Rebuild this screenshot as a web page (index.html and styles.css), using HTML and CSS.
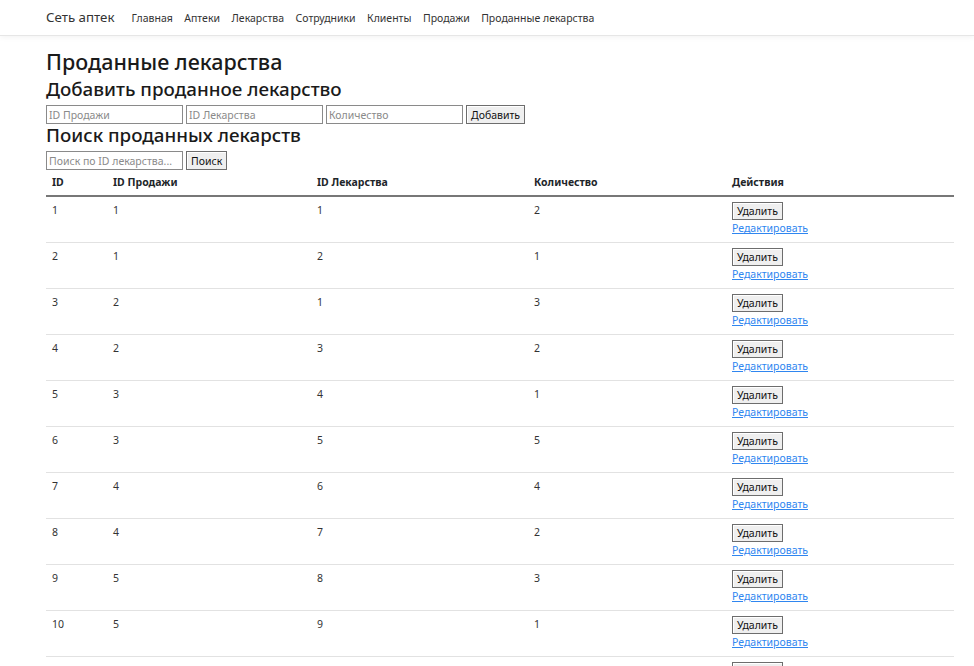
FILE: index.html
```html
<!DOCTYPE html>
<html lang="ru">
<head>
<meta charset="utf-8">
<title>Проданные лекарства</title>
<link rel="stylesheet" href="styles.css">
</head>
<body>
<nav class="navbar">
  <a class="brand" href="#">Сеть аптек</a>
  <ul class="nav-links">
    <li><a href="#">Главная</a></li>
    <li><a href="#">Аптеки</a></li>
    <li><a href="#">Лекарства</a></li>
    <li><a href="#">Сотрудники</a></li>
    <li><a href="#">Клиенты</a></li>
    <li><a href="#">Продажи</a></li>
    <li><a href="#">Проданные лекарства</a></li>
  </ul>
</nav>
<main class="container">
  <h1 class="title">Проданные лекарства</h1>
  <h2 class="subtitle">Добавить проданное лекарство</h2>
  <form class="row-form">
    <input class="field" type="text" placeholder="ID Продажи">
    <input class="field" type="text" placeholder="ID Лекарства">
    <input class="field" type="text" placeholder="Количество">
    <button class="btn" type="button">Добавить</button>
  </form>
  <h2 class="subtitle search-title">Поиск проданных лекарств</h2>
  <form class="row-form">
    <input class="field" type="text" placeholder="Поиск по ID лекарства...">
    <button class="btn" type="button">Поиск</button>
  </form>
  <table class="data">
    <thead>
      <tr>
        <th class="c1">ID</th>
        <th class="c2">ID Продажи</th>
        <th class="c3">ID Лекарства</th>
        <th class="c4">Количество</th>
        <th class="c5">Действия</th>
      </tr>
    </thead>
    <tbody>
      <tr><td>1</td><td>1</td><td>1</td><td>2</td><td><button class="btn" type="button">Удалить</button><a class="edit" href="#">Редактировать</a></td></tr>
      <tr><td>2</td><td>1</td><td>2</td><td>1</td><td><button class="btn" type="button">Удалить</button><a class="edit" href="#">Редактировать</a></td></tr>
      <tr><td>3</td><td>2</td><td>1</td><td>3</td><td><button class="btn" type="button">Удалить</button><a class="edit" href="#">Редактировать</a></td></tr>
      <tr><td>4</td><td>2</td><td>3</td><td>2</td><td><button class="btn" type="button">Удалить</button><a class="edit" href="#">Редактировать</a></td></tr>
      <tr><td>5</td><td>3</td><td>4</td><td>1</td><td><button class="btn" type="button">Удалить</button><a class="edit" href="#">Редактировать</a></td></tr>
      <tr><td>6</td><td>3</td><td>5</td><td>5</td><td><button class="btn" type="button">Удалить</button><a class="edit" href="#">Редактировать</a></td></tr>
      <tr><td>7</td><td>4</td><td>6</td><td>4</td><td><button class="btn" type="button">Удалить</button><a class="edit" href="#">Редактировать</a></td></tr>
      <tr><td>8</td><td>4</td><td>7</td><td>2</td><td><button class="btn" type="button">Удалить</button><a class="edit" href="#">Редактировать</a></td></tr>
      <tr><td>9</td><td>5</td><td>8</td><td>3</td><td><button class="btn" type="button">Удалить</button><a class="edit" href="#">Редактировать</a></td></tr>
      <tr><td>10</td><td>5</td><td>9</td><td>1</td><td><button class="btn" type="button">Удалить</button><a class="edit" href="#">Редактировать</a></td></tr>
      <tr><td>11</td><td>6</td><td>10</td><td>2</td><td><button class="btn" type="button">Удалить</button><a class="edit" href="#">Редактировать</a></td></tr>
    </tbody>
  </table>
</main>
</body>
</html>
```
FILE: styles.css
```css
* { box-sizing: border-box; }
html, body { margin: 0; padding: 0; }
body {
  font-family: "Noto Sans", "Open Sans", sans-serif;
  color: #212529;
  background: #fff;
  font-size: 11px;
}
.navbar {
  height: 35px;
  display: flex;
  align-items: center;
  padding: 0 46px;
  background: #fff;
  box-shadow: 0 1px 0 #e6e6e6, 0 2px 6px rgba(0,0,0,0.06);
  position: relative;
}
.brand {
  font-size: 13.3px;
  color: #333;
  text-decoration: none;
  margin-right: 17px;
  margin-top: -1px;
}
.nav-links {
  list-style: none;
  margin: 0;
  padding: 0;
  display: flex;
  gap: 11.5px;
}
.nav-links a {
  color: #333;
  text-decoration: none;
  font-size: 10.5px;
}
.container {
  padding: 12px 20px 0 46px;
}
.title {
  font-size: 21.5px;
  font-weight: 500;
  line-height: 29px;
  margin: 0 0 1px;
  color: #1a1a1a;
}
.subtitle {
  font-size: 18.8px;
  font-weight: 500;
  line-height: 25px;
  margin: 0;
  color: #1a1a1a;
}
.search-title { margin-top: -1px; }
.row-form {
  display: flex;
  gap: 3px;
  margin: 3px 0 0;
  height: 19px;
}
.field {
  width: 137px;
  height: 19px;
  border: 1px solid #8a8a8a;
  padding: 0 2px;
  font-family: inherit;
  font-size: 10.5px;
  color: #333;
  background: #fff;
}
.field::placeholder { color: #8a8a8a; }
.btn {
  height: 19px;
  padding: 0 4px;
  font-family: inherit;
  font-size: 10.5px;
  color: #111;
  background: #efefef;
  border: 1px solid #6d6d6d;
  border-radius: 0;
  box-shadow: inset 1px 1px 0 #fff;
}
.data {
  width: 908px;
  border-collapse: collapse;
  margin-top: 3px;
}
.data th {
  text-align: left;
  vertical-align: top;
  font-weight: 700;
  font-size: 10.5px;
  line-height: 15px;
  padding: 2px 6px 0;
  height: 23px;
  border-bottom: 2px solid #777;
}
.data td {
  vertical-align: top;
  padding: 6px 6px 4px;
  height: 46px;
  border-bottom: 1px solid #e2e2e2;
  font-size: 10.5px;
  color: #333;
}
.c1 { width: 61px; }
.c2 { width: 204px; }
.c3 { width: 217px; }
.c4 { width: 198px; }
.c5 { width: 228px; }
.data td .btn {
  display: block;
  height: 18px;
  margin-top: -1px;
}
.edit {
  display: block;
  color: #2f86f0;
  text-decoration: underline;
  font-size: 10.5px;
  margin-top: 1px;
}
```
